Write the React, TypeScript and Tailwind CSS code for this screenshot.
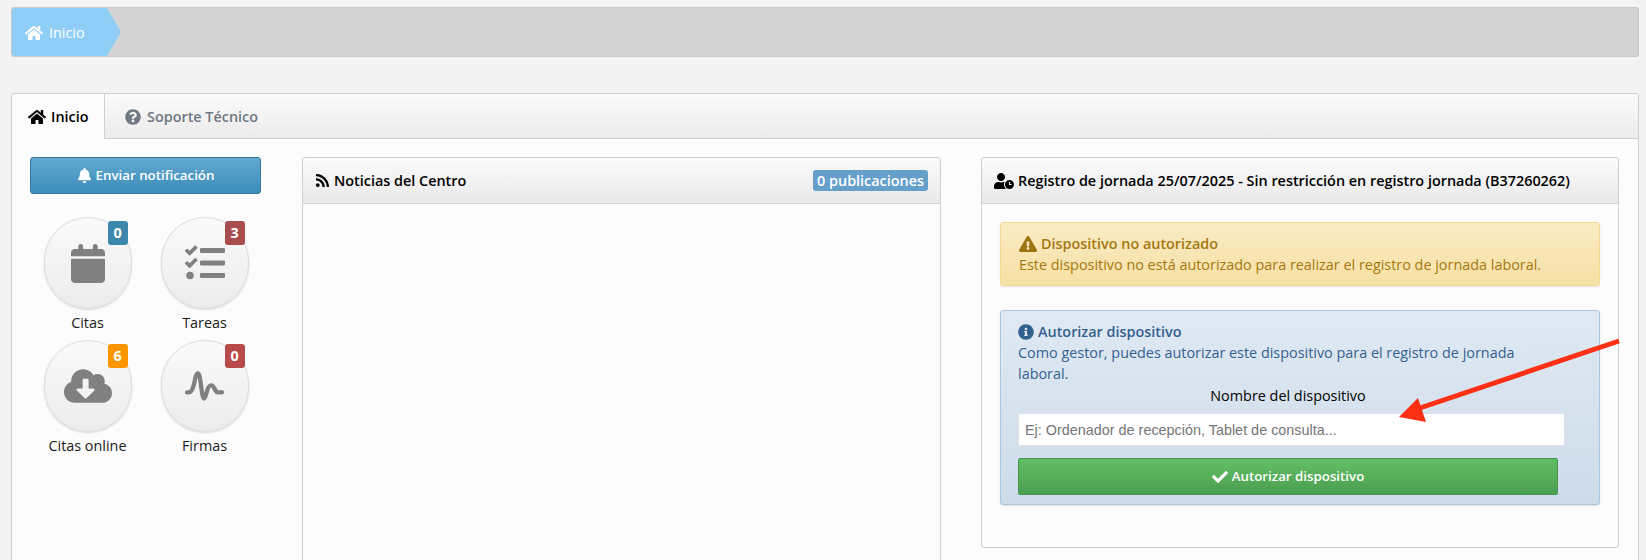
import { FaHome, FaQuestionCircle, FaBell, FaRss, FaCheck, FaExclamationTriangle, FaInfoCircle, FaUserClock, FaTasks, FaCloudDownloadAlt } from 'react-icons/fa'
import { FaCalendar } from 'react-icons/fa6'
import type { ReactNode } from 'react'

function SignatureIcon() {
  return (
    <svg viewBox="0 0 40 32" className="w-[39px] h-[31px]" fill="none" stroke="#808080" strokeWidth="4.4" strokeLinecap="round" strokeLinejoin="round">
      <path d="M2 22c5 1 6-4 7.500-10C10.500 7 11.500 2.500 13 2.500c2 0 2.500 6 3.500 13 .7 5 1.500 13 3 13S22 22 23.500 18c1-2.500 3-4 5-2.500 2 1.500 2.500 6 5 6.500H38" />
    </svg>
  )
}

const shortcuts = [
  { label: 'Citas', count: 0, badge: 'bg-[#3d87ac]', icon: <FaCalendar className="w-[34px] h-[39px] text-[#808080]" /> },
  { label: 'Tareas', count: 3, badge: 'bg-[#a94c4e]', icon: <FaTasks className="text-[40px] text-[#808080]" /> },
  { label: 'Citas online', count: 6, badge: 'bg-[#fb9600]', icon: <FaCloudDownloadAlt className="text-[48px] text-[#808080]" /> },
  { label: 'Firmas', count: 0, badge: 'bg-[#b94a4c]', icon: <SignatureIcon /> },
]

function Panel({ icon, title, right, children, className }: { icon: ReactNode; title: string; right?: ReactNode; children?: ReactNode; className: string }) {
  return (
    <div className={`flex flex-col bg-[#fcfcfc] border border-[#cfcfcf] rounded-[3px] ${className}`}>
      <div className="flex items-center h-[46px] shrink-0 pl-3 pr-3 border-b border-[#d2d2d2] bg-gradient-to-b from-[#fbfbfb] to-[#e9e9e9] rounded-t-[3px]">
        {icon}
        <span className="text-[14.4px] font-semibold text-black">{title}</span>
        {right}
      </div>
      {children}
    </div>
  )
}

export default function App() {
  return (
    <div className="relative h-[560px] overflow-hidden bg-[#f3f3f3] pl-[11px] pt-[7px] pr-[7px] text-black" style={{ fontFamily: '"Open Sans", "Noto Sans", sans-serif' }}>
      {/* migas */}
      <div className="h-[50px] bg-[#d3d3d3] border border-[#c9c9c9] rounded-[3px] flex">
        <div className="relative flex items-center w-[95px] pl-[13px] pt-px gap-[6px] bg-[#8fcef7] text-white text-[14.4px] rounded-l-[3px]">
          <FaHome className="text-[18px]" />
          <span>Inicio</span>
          <span className="absolute left-full top-0 border-y-[24px] border-y-transparent border-l-[14px] border-l-[#8fcef7]" />
        </div>
      </div>

      {/* pestañas */}
      <div className="mt-[36px] h-[600px] bg-[#fcfcfc] border border-[#cfcfcf] rounded-[3px]">
        <div className="flex h-[45px] bg-gradient-to-b from-[#fbfbfb] to-[#ebebeb] border-b border-[#d0d0d0] rounded-t-[3px]">
          <div className="flex items-center gap-[5px] w-[93px] h-[45px] pl-4 pt-px bg-[#fcfcfc] border-r border-[#d0d0d0] text-[14.4px] font-semibold rounded-tl-[3px]">
            <FaHome className="text-[18px]" />
            <span>Inicio</span>
          </div>
          <div className="flex items-center gap-[6px] pl-5 pt-[2px] text-[14.4px] font-semibold text-[#6f7883]">
            <FaQuestionCircle className="text-[16px]" />
            <span>Soporte Técnico</span>
          </div>
        </div>

        <div className="flex pt-[18px] pl-[18px]">
          <div className="w-[231px] shrink-0">
            <button className="flex items-center justify-center gap-1 w-full h-[37px] rounded-[3px] border border-[#37799e] bg-gradient-to-b from-[#62a8cf] to-[#3c8dbb] text-white text-[13.3px] font-semibold">
              <FaBell className="text-[15px]" />
              Enviar notificación
            </button>
            <div className="grid grid-cols-[117px_117px] -ml-px mt-[23px]">
              {shortcuts.map((s) => (
                <div key={s.label} className="flex flex-col items-center h-[123px]">
                  <div className="relative flex items-center justify-center w-[88px] h-[92px] rounded-full border border-[#dcdcdc] bg-gradient-to-b from-[#fafafa] to-[#ececec] shadow-[0_1px_2px_rgba(0,0,0,0.15)]">
                    {s.icon}
                    <span className={`absolute left-[63px] top-[3px] flex items-center justify-center w-5 h-6 rounded-[3px] text-white text-[14.4px] font-bold ${s.badge}`}>{s.count}</span>
                  </div>
                  <span className="mt-[4px] text-[14.4px] leading-5 text-[#1a1a1a]">{s.label}</span>
                </div>
              ))}
            </div>
          </div>

          <Panel
            className="ml-[41px] w-[639px] h-[500px] shrink-0"
            icon={<FaRss className="text-[15px] mr-[4px]" />}
            title="Noticias del Centro"
            right={
              <span className="ml-auto px-[4px] h-[21px] leading-[21px] rounded-[3px] bg-[#659fca] text-white text-[14.4px] font-semibold">0 publicaciones</span>
            }
          />

          <Panel
            className="ml-[40px] w-[638px] h-[391px] shrink-0"
            icon={<FaUserClock className="text-[20px] mr-[4px]" />}
            title="Registro de jornada 25/07/2025 - Sin restricción en registro jornada (B37260262)"
          >
            <div className="px-[18px] pt-[18px]">
              <div className="h-[64px] px-[18px] pt-[10px] rounded-[3px] border border-[#f3d88f] bg-gradient-to-b from-[#faebc4] to-[#f6e0a4] text-[#a5780f] text-[14.4px] leading-[21px] shadow-[0_1px_2px_rgba(0,0,0,0.08)]">
                <div className="flex items-center gap-[4px] font-semibold">
                  <FaExclamationTriangle className="text-[18px] text-[#9a7414]" />
                  Dispositivo no autorizado
                </div>
                <div>Este dispositivo no está autorizado para realizar el registro de jornada laboral.</div>
              </div>

              <div className="h-[195px] mt-[24px] px-[17px] pt-[10px] rounded-[3px] border border-[#a9c6e0] bg-gradient-to-b from-[#e0e9f3] to-[#cddbe9] text-[#33618f] text-[14.4px] leading-[21px] shadow-[0_1px_2px_rgba(0,0,0,0.1)]">
                <div className="flex items-center gap-[4px] font-semibold">
                  <FaInfoCircle className="text-[16px] text-[#33618f]" />
                  Autorizar dispositivo
                </div>
                <div className="w-[540px]">Como gestor, puedes autorizar este dispositivo para el registro de jornada laboral.</div>
                <div className="w-[540px] text-center text-black mt-px">Nombre del dispositivo</div>
                <input
                  placeholder="Ej: Ordenador de recepción, Tablet de consulta..."
                  className="block w-[547px] h-[33px] mt-[7px] px-[6px] bg-white border border-[#dde3ea] text-[14.4px] outline-none placeholder:text-[#757575]"
                  style={{ fontFamily: '"Liberation Sans", Arial, sans-serif' }}
                />
                <button className="flex items-center justify-center gap-1 w-[540px] h-[37px] mt-[12px] rounded-[2px] border border-[#47964b] bg-gradient-to-b from-[#62bf65] to-[#4b9e50] text-white text-[13.3px] font-semibold">
                  <FaCheck className="text-[16px]" />
                  Autorizar dispositivo
                </button>
              </div>
            </div>
          </Panel>
        </div>
      </div>

      {/* flecha roja sobre la captura */}
      <svg className="absolute left-0 top-0 pointer-events-none" width="1646" height="560" viewBox="0 0 1646 560">
        <path d="M1619 341L1414 410" stroke="#fc3014" strokeWidth="5" fill="none" />
        <path d="M1399 417L1418 398L1426 422Z" fill="#fc3014" />
      </svg>
    </div>
  )
}
